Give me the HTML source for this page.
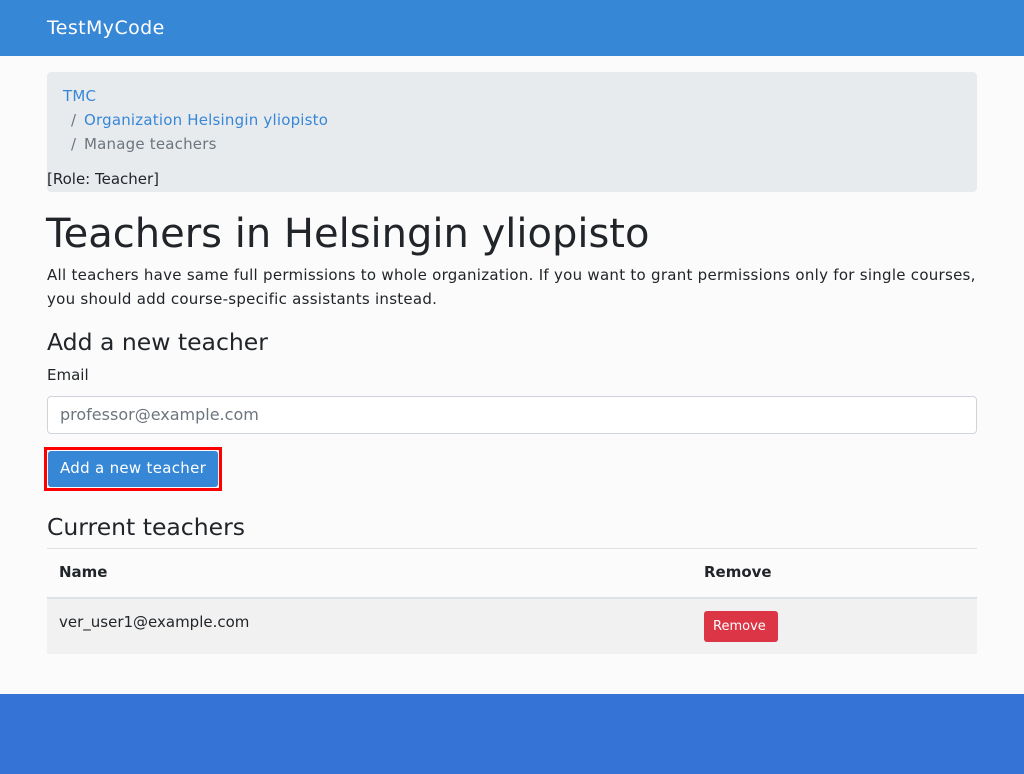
<!DOCTYPE html>
<html><head><meta charset="utf-8"><style>
*{box-sizing:border-box}
body{margin:0;background:#fbfbfb;font-family:"DejaVu Sans","Liberation Sans",sans-serif;color:#212529;font-size:15px;width:1024px;height:774px;position:relative;overflow:hidden}
.nav{height:56px;background:#3787d7;color:#fff;font-size:19px;padding:17px 47px;letter-spacing:0.4px}
.wrap{position:absolute;left:47px;width:930px}
.bc{top:72px;height:120px;background:#e8ebee;border-radius:4px;padding:12px 16px;line-height:24px;font-size:15px;letter-spacing:0.2px}
.t{position:absolute;white-space:nowrap}
h1{font-size:40px;font-weight:normal;margin:0}
h2{font-size:23.5px;font-weight:normal;margin:0}
.foot{position:absolute;left:0;top:694px;width:1024px;height:80px;background:#3574d6}
.sl{color:#6c757d;display:inline-block;width:13px}
</style></head><body>
<div class="nav">TestMyCode</div>
<div class="wrap bc">
<div style="color:#3787d7">TMC</div>
<div style="padding-left:8px"><span class="sl">/</span><span style="color:#3787d7">Organization Helsingin yliopisto</span></div>
<div style="padding-left:8px;color:#6c757d"><span class="sl">/</span>Manage teachers</div>
</div>
<div class="t" style="left:47px;top:170px;font-size:15px">[Role: Teacher]</div>
<h1 class="t" style="left:46px;top:211px">Teachers in Helsingin yliopisto</h1>
<div class="t" style="left:47px;top:263px;line-height:24px;white-space:normal;width:935px;font-size:15px;letter-spacing:0.27px">All teachers have same full permissions to whole organization. If you want to grant permissions only for single courses, you should add course-specific assistants instead.</div>
<h2 class="t" style="left:47px;top:328px">Add a new teacher</h2>
<div class="t" style="left:47px;top:366px">Email</div>
<div class="t" style="left:47px;top:396px;width:930px;height:38px;border:1px solid #ced4da;border-radius:4px;background:#fff;padding:8px 12px;color:#6c757d;font-size:16px">professor@example.com</div>
<div class="t" style="left:44px;top:447px;width:178px;height:44px;border:3px solid #f00"></div>
<div class="t" style="left:48px;top:451px;width:170px;height:36px;background:#3787d7;color:#fff;border-radius:3px;padding:8px 12px;font-size:15px;letter-spacing:0.3px">Add a new teacher</div>
<h2 class="t" style="left:47px;top:513px">Current teachers</h2>
<div class="t" style="left:47px;top:548px;width:930px;border-top:1px solid #dee2e6"></div>
<div class="t" style="left:59px;top:563px;font-weight:bold">Name</div>
<div class="t" style="left:704px;top:563px;font-weight:bold">Remove</div>
<div class="t" style="left:47px;top:597px;width:930px;height:57px;background:#f1f1f1;border-top:2px solid #dee2e6"></div>
<div class="t" style="left:59px;top:613px">ver_user1@example.com</div>
<div class="t" style="left:704px;top:611px;width:74px;height:31px;background:#dc3545;color:#fff;border-radius:3px;font-size:13px;padding:8px 9px">Remove</div>
<div class="foot"></div>
</body></html>
